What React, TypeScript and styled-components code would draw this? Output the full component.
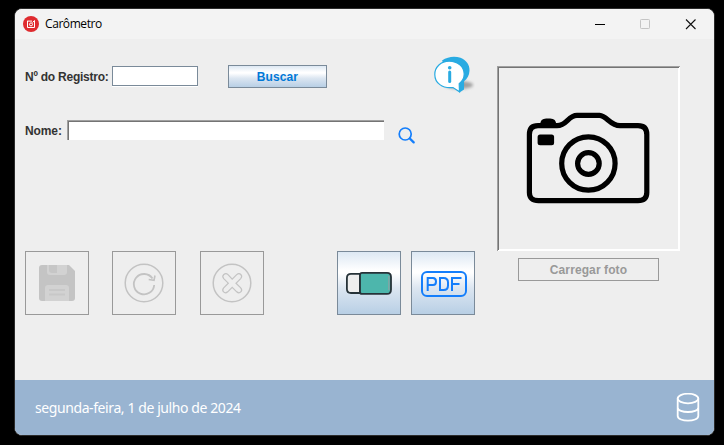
import React from "react";
import styled, { createGlobalStyle } from "styled-components";

const GlobalStyle = createGlobalStyle`
  * { box-sizing: border-box; }
  html, body { margin: 0; background: #000; overflow: hidden; }
  svg { display: block; flex: none; }
  button { padding: 0; margin: 0; }
`;

const Desktop = styled.div`
  width: 724px;
  height: 445px;
  padding: 8px 0 0 14px;
  background: #000;
`;

const Window = styled.main`
  width: 701px;
  height: 428px;
  display: flex;
  flex-direction: column;
  border: 1px solid #2b2b2b;
  border-radius: 8px;
  overflow: hidden;
  background: #eee;
  font-family: "Liberation Sans", Arial, sans-serif;
`;

const TitleBar = styled.header`
  height: 30px;
  flex: none;
  display: flex;
  align-items: center;
  padding: 0 18px 0 8px;
  background: #f3f3f3;
`;

const Title = styled.h1`
  margin: 0 auto 0 6px;
  font: 400 12px/16px "Open Sans", "Noto Sans", sans-serif;
  letter-spacing: -0.42px;
  color: #000;
`;

const WindowControls = styled.div`
  display: flex;
  gap: 35px;
`;

const Body = styled.div`
  height: 341px;
  flex: none;
  display: flex;
  gap: 22px;
  padding-left: 10px;
`;

const Form = styled.section`
  width: 450px;
  display: flex;
  flex-direction: column;
`;

const Row = styled.div<{ $top: number; $height: number }>`
  display: flex;
  align-items: center;
  margin-top: ${(p) => p.$top}px;
  height: ${(p) => p.$height}px;
`;

const Label = styled.label<{ $width: number; $tracking?: number }>`
  width: ${(p) => p.$width}px;
  flex: none;
  font-size: 12px;
  font-weight: 700;
  line-height: 14px;
  letter-spacing: ${(p) => p.$tracking ?? 0}px;
  padding-top: 1px;
  white-space: nowrap;
  color: #333;
`;

const RegistryInput = styled.input`
  width: 86px;
  height: 20px;
  padding: 0 3px;
  border: 1px solid #7a8a99;
  box-shadow: 0 1px 0 #fff;
  margin-top: -1px;
  background: #fff;
  outline: none;
  border-radius: 0;
`;

const NameInput = styled.input`
  width: 317px;
  height: 20px;
  padding: 0 3px;
  border: 0;
  border-radius: 0;
  background: #fff;
  box-shadow: inset 1px 1px 0 #a0a0a0, inset 2px 2px 0 #747474;
  outline: none;
`;

const gradient = "linear-gradient(#dde8f3 0%, #fff 30%, #fff 34%, #dce6f1 58%, #b8cfe5 100%)";

const TextButton = styled.button<{ $width: number }>`
  width: ${(p) => p.$width}px;
  height: 23px;
  padding: 1px 0 0 0;
  border: 1px solid #7a8a99;
  border-radius: 0;
  background: ${gradient};
  font: 700 12px/20px "Liberation Sans", Arial, sans-serif;
  letter-spacing: 0.1px;
  color: #0078d7;
  &:disabled {
    border-color: #999;
    background: #eee;
    color: #999;
  }
`;

const IconButton = styled.button`
  width: 64px;
  height: 64px;
  flex: none;
  display: flex;
  align-items: center;
  justify-content: center;
  border: 1px solid #7a8a99;
  border-radius: 0;
  background: ${gradient};
  &:disabled {
    border-color: #999;
    background: #eee;
  }
`;

const PdfButton = styled(IconButton)`
  padding: 2px 0 0 2px;
`;

const Actions = styled.div`
  display: flex;
  justify-content: space-between;
  margin-top: 109px;
`;

const ActionGroup = styled.div<{ $gap: number }>`
  display: flex;
  gap: ${(p) => p.$gap}px;
`;

const Push = styled.div<{ $left: number; $top?: number }>`
  margin-left: ${(p) => p.$left}px;
  margin-top: ${(p) => p.$top ?? 0}px;
`;

const PhotoColumn = styled.aside`
  width: 183px;
  display: flex;
  flex-direction: column;
  align-items: center;
  gap: 7px;
  padding-top: 27px;
`;

const PhotoFrame = styled.div`
  width: 183px;
  height: 185px;
  display: flex;
  align-items: center;
  justify-content: center;
  padding: 0 1px 2px 0;
  box-shadow: inset 1px 1px 0 #a0a0a0, inset -1px -1px 0 #fff,
    inset 2px 2px 0 #747474, inset -2px -2px 0 #fff;
`;

const Footer = styled.footer`
  height: 55px;
  flex: none;
  display: flex;
  align-items: center;
  justify-content: space-between;
  padding: 0 14px 0 20px;
  background: #99b4d1;
  color: #fff;
`;

const DateText = styled.time`
  font: 400 14px/18px "Noto Sans", "Open Sans", sans-serif;
  letter-spacing: -0.41px;
  padding-top: 1px;
`;

const AppIcon = () => (
  <svg width="16" height="16" viewBox="0 0 16 16">
    <circle cx="8" cy="8" r="8" fill="#df2b2f" />
    <path d="M4.5 4.8v6.700h7v-7" fill="none" stroke="#fff" strokeWidth="1" />
    <path d="M4.500 5.100h4.500M9.500 6.500l2-2" stroke="#fff" strokeWidth="1" />
    <circle cx="8" cy="8.400" r="1.500" fill="none" stroke="#fff" strokeWidth="1" />
  </svg>
);

const MinimizeIcon = () => (
  <svg width="10" height="10" viewBox="0 0 10 10"><path d="M0 5.5h10" stroke="#000" /></svg>
);
const MaximizeIcon = () => (
  <svg width="10" height="10" viewBox="0 0 10 10">
    <rect x=".5" y=".5" width="9" height="9" rx=".8" fill="none" stroke="#c4c4c4" />
  </svg>
);
const CloseIcon = () => (
  <svg width="11" height="11" viewBox="0 0 11 11"><path d="M1 .5l9.500 9.500M10.500.5L1 10" stroke="#111" strokeWidth="1.100" /></svg>
);

const InfoIcon = () => (
  <svg width="42" height="40" viewBox="0 0 42 40">
    <defs>
      <filter id="soft" x="-30%" y="-60%" width="160%" height="220%"><feGaussianBlur stdDeviation="1.7" /></filter>
    </defs>
    <ellipse cx="26" cy="30" rx="14" ry="4" fill="#777" opacity=".65" filter="url(#soft)" />
    <path d="M9 5.500C15 1.300 22 .8 27.500 2.800c6 2.400 9.300 7.200 9 12.900-.2 4.500-2.200 8-5.400 10.600L31 34.500 26.500 37.500 23 33z" fill="#29abe2" />
    <path d="M16.200 6.200c8.500 0 15 5.600 15 12.900 0 4-1.800 7.200-5 9.600l.3 8.100-6.500-4.300C9.200 33.800 1.800 27.900 1.800 19.400 1.800 11.900 8 6.200 16.200 6.200z" fill="#fff" stroke="#29abe2" strokeWidth="1.200" />
    <circle cx="16.700" cy="12.700" r="1.800" fill="#29abe2" />
    <path d="M16.700 17v9.500" stroke="#29abe2" strokeWidth="3" strokeLinecap="round" />
  </svg>
);

const SearchIcon = () => (
  <svg width="18" height="18" viewBox="0 0 18 18" fill="none" stroke="#147efb" strokeLinecap="round">
    <circle cx="7.200" cy="7" r="6" strokeWidth="1.700" />
    <path d="M11.800 11.500l3.900 3.900" strokeWidth="2.300" />
  </svg>
);

const CameraIcon = () => (
  <svg width="127" height="96" viewBox="0 0 127 96" fill="none" stroke="#000" strokeWidth="5.200">
    <path d="M13 15.700H32C42 15.700 43 5.400 52 5.400H74.500C82 6 85 15.700 95 15.700H113Q121.800 15.700 121.800 24.500V82.500Q121.800 90.600 113 90.600H13.500Q4.400 90.600 4.400 82.500V24.500Q4.400 15.700 13 15.700Z" />
    <path d="M15.200 15.500v-1q0-6 6-6h4q6 0 6 6v1z" fill="#000" stroke="none" />
    <rect x="12.600" y="24.500" width="16.500" height="10.800" rx="2.500" fill="#000" stroke="none" />
    <circle cx="63.400" cy="53.500" r="26.700" />
    <circle cx="63.400" cy="53.500" r="10.800" />
  </svg>
);

const SaveIcon = () => (
  <svg width="36" height="36" viewBox="0 0 36 36">
    <path d="M3 0h27l6 6v27q0 3-3 3H3q-3 0-3-3V3q0-3 3-3z" fill="#c4c4c4" />
    <path d="M8 0h20v7q0 3-3 3H11q-3 0-3-3zM6 36V23q0-3 3-3h18q3 0 3 3v13z" fill="#d2d2d2" />
    <path d="M10 0h8v8h-5q-3 0-3-3z" fill="#c6c6c6" />
    <path d="M10 25h16M10 29.500h16" stroke="#c8c8c8" strokeWidth="2" />
  </svg>
);

const RefreshIcon = () => (
  <svg width="40" height="40" viewBox="0 0 40 40" fill="none" stroke="#c3c3c3">
    <circle cx="20" cy="20" r="18.800" strokeWidth="1.500" />
    <path d="M28.500 15.500A10.200 10.200 0 1 0 30.200 22" strokeWidth="1.800" />
    <path d="M31 12.500l-1 4.800-5.300-.8" strokeWidth="1.600" />
  </svg>
);

const CancelIcon = () => (
  <svg width="40" height="40" viewBox="0 0 40 40" fill="none" stroke="#c3c3c3">
    <circle cx="20" cy="20" r="18.800" strokeWidth="1.500" />
    <path d="M16 11.600l4.200 4.600 4.500-4.600c3-2.500 6.600 1 4 4L24 20.200l4.700 4.600c2.600 3-1 6.600-4 4l-4.500-4.500-4.500 4.500c-3 2.600-6.600-1-4-4l4.600-4.600-4.600-4.600c-2.600-3 1.500-6.500 4.300-4z" strokeWidth="1.200" />
  </svg>
);

const EraserIcon = () => (
  <svg width="46" height="23" viewBox="0 0 46 23" stroke="#263238" strokeWidth="1.800">
    <path d="M14 1.900H5Q.9 1.900.9 6v11q0 4 4.100 4h9z" fill="#eee" />
    <path d="M16 .9h25q4 0 4 4v12.500q0 4.500-4 4.500H16q-2 0-2-2v-17q0-2 2-2z" fill="#4db6ac" />
    <path d="M42.800 4v14" stroke="#80a5a5" strokeWidth="1.500" />
  </svg>
);

const PdfIcon = () => (
  <svg width="46" height="26" viewBox="0 0 46 26" fill="none" stroke="#147efb" strokeWidth="2">
    <rect x="1" y="1" width="44" height="24" rx="5" />
    <path d="M6.700 20V7h5.300Q15 7 15 10.500T12 14H6.700M19 7h3.500Q27 7 27 11.500v3Q27 19 22.500 19H19zM31 20V7h9.500M31 13h7.500" />
  </svg>
);

const DatabaseIcon = () => (
  <svg width="24" height="30" viewBox="0 0 24 30" fill="none" stroke="#fff" strokeWidth="1.800">
    <ellipse cx="12" cy="5.500" rx="10.300" ry="4.800" />
    <path d="M1.700 5.500v17.500c0 6.200 20.600 6.200 20.600 0V5.500M1.700 14.500c0 6 20.600 6 20.600 0" />
  </svg>
);

export default function App() {
  return (
    <>
      <GlobalStyle />
      <Desktop>
        <Window>
          <TitleBar>
            <AppIcon />
            <Title>Carômetro</Title>
            <WindowControls>
              <MinimizeIcon />
              <MaximizeIcon />
              <CloseIcon />
            </WindowControls>
          </TitleBar>
          <Body>
            <Form>
              <Row $top={17} $height={40}>
                <Label htmlFor="registro" $width={87} $tracking={-0.23}>Nº do Registro:</Label>
                <RegistryInput id="registro" />
                <Push $left={30} $top={1}><TextButton $width={99}>Buscar</TextButton></Push>
                <Push $left={106} $top={-2}><InfoIcon /></Push>
              </Row>
              <Row $top={22} $height={24}>
                <Label htmlFor="nome" $width={42} $tracking={-0.1}>Nome:</Label>
                <NameInput id="nome" />
                <Push $left={14} $top={11}><SearchIcon /></Push>
              </Row>
              <Actions>
                <ActionGroup $gap={23.4}>
                  <IconButton disabled aria-label="Salvar"><SaveIcon /></IconButton>
                  <IconButton disabled aria-label="Atualizar"><RefreshIcon /></IconButton>
                  <IconButton disabled aria-label="Excluir"><CancelIcon /></IconButton>
                </ActionGroup>
                <ActionGroup $gap={10}>
                  <IconButton aria-label="Limpar"><EraserIcon /></IconButton>
                  <PdfButton aria-label="Gerar relatório"><PdfIcon /></PdfButton>
                </ActionGroup>
              </Actions>
            </Form>
            <PhotoColumn>
              <PhotoFrame><CameraIcon /></PhotoFrame>
              <TextButton $width={141} disabled>Carregar foto</TextButton>
            </PhotoColumn>
          </Body>
          <Footer>
            <DateText dateTime="2024-07-01">segunda-feira, 1 de julho de 2024</DateText>
            <DatabaseIcon />
          </Footer>
        </Window>
      </Desktop>
    </>
  );
}
